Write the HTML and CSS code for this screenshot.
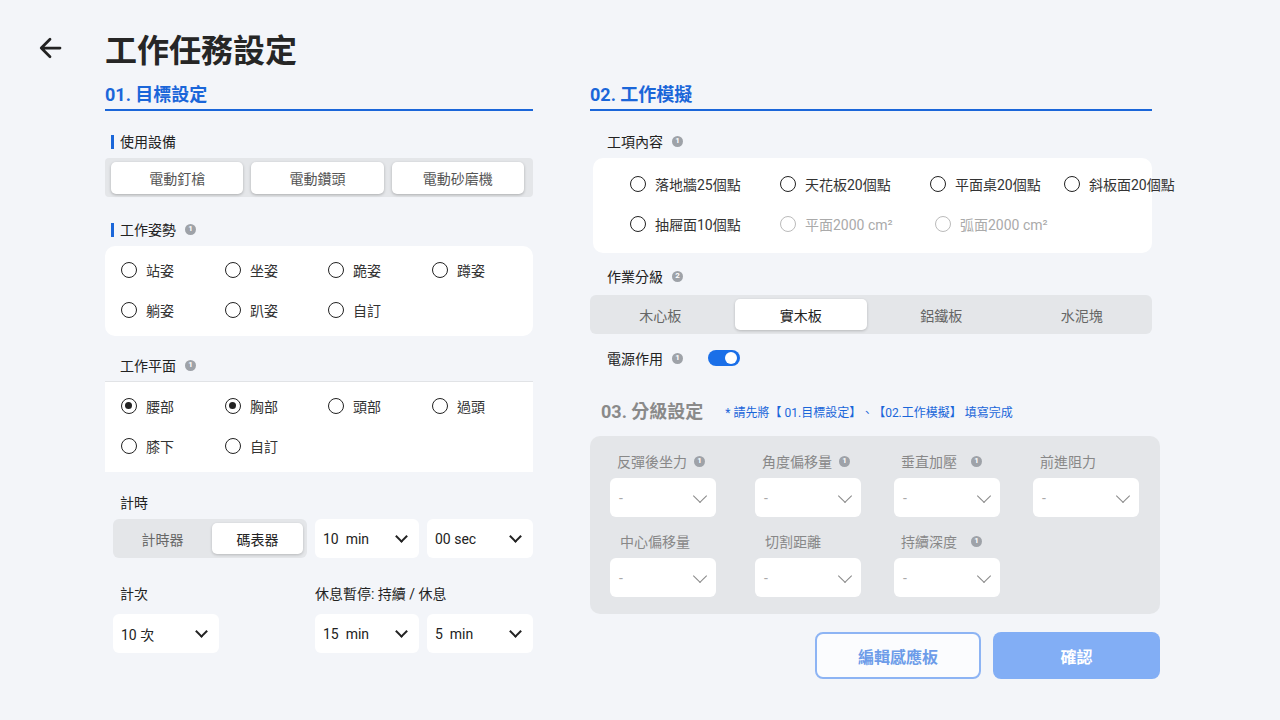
FILE: index.html
```html
<!DOCTYPE html>
<html lang="zh-Hant">
<head>
    <meta charset="UTF-8">
    <title>工作任務設定</title>
    <link rel="stylesheet" href="styles.css">
</head>
<body>
    <div class="page">
        <div class="topbar">
            <svg class="back" width="30" height="30" viewBox="0 0 24 24"><path d="M20 12H5M12 5l-7 7 7 7" fill="none" stroke="#222" stroke-width="2.2" stroke-linecap="round" stroke-linejoin="round"/></svg>
            <h1>工作任務設定</h1>
        </div>

        <div class="columns">
            <!-- 01 -->
            <div class="col-left">
                <div class="sec-title">01. 目標設定</div>

                <div class="label bar first">使用設備</div>
                <div class="tool-group">
                    <div class="tool">電動釘槍</div>
                    <div class="tool">電動鑽頭</div>
                    <div class="tool">電動砂磨機</div>
                </div>

                <div class="label bar">工作姿勢 <span class="info">1</span></div>
                <div class="card radio-grid">
                    <label class="radio"><span class="dot"></span>站姿</label>
                    <label class="radio"><span class="dot"></span>坐姿</label>
                    <label class="radio"><span class="dot"></span>跪姿</label>
                    <label class="radio"><span class="dot"></span>蹲姿</label>
                    <label class="radio"><span class="dot"></span>躺姿</label>
                    <label class="radio"><span class="dot"></span>趴姿</label>
                    <label class="radio"><span class="dot"></span>自訂</label>
                </div>

                <div class="label plane-label">工作平面 <span class="info">1</span></div>
                <div class="plane radio-grid">
                    <label class="radio"><span class="dot on"></span>腰部</label>
                    <label class="radio"><span class="dot on"></span>胸部</label>
                    <label class="radio"><span class="dot"></span>頭部</label>
                    <label class="radio"><span class="dot"></span>過頭</label>
                    <label class="radio"><span class="dot"></span>膝下</label>
                    <label class="radio"><span class="dot"></span>自訂</label>
                </div>

                <div class="timer">
                    <div class="t-label">計時</div>
                    <div class="t-label"></div>
                    <div class="t-label"></div>
                    <div class="seg small">
                        <div class="seg-item">計時器</div>
                        <div class="seg-item active">碼表器</div>
                    </div>
                    <div class="select">10&nbsp; min<span class="chev"></span></div>
                    <div class="select">00 sec<span class="chev"></span></div>

                    <div class="t-label second">計次</div>
                    <div class="t-label second span2">休息暫停: 持續 / 休息</div>
                    <div><div class="select count">10 次<span class="chev"></span></div></div>
                    <div class="select">15&nbsp; min<span class="chev"></span></div>
                    <div class="select">5&nbsp; min<span class="chev"></span></div>
                </div>
            </div>

            <!-- 02 / 03 -->
            <div class="col-right">
                <div class="sec-title narrow">02. 工作模擬</div>

                <div class="label r first">工項內容 <span class="info">1</span></div>
                <div class="card work-card">
                    <label class="radio"><span class="dot"></span>落地牆25個點</label>
                    <label class="radio"><span class="dot"></span>天花板20個點</label>
                    <label class="radio"><span class="dot"></span>平面桌20個點</label>
                    <label class="radio"><span class="dot"></span>斜板面20個點</label>
                    <label class="radio"><span class="dot"></span>抽屜面10個點</label>
                    <label class="radio off"><span class="dot"></span>平面2000 cm²</label>
                    <label class="radio off shift"><span class="dot"></span>弧面2000 cm²</label>
                </div>

                <div class="label r grade">作業分級 <span class="info">2</span></div>
                <div class="seg wide">
                    <div class="seg-item">木心板</div>
                    <div class="seg-item active">實木板</div>
                    <div class="seg-item">鋁鐵板</div>
                    <div class="seg-item">水泥塊</div>
                </div>

                <div class="label r power">電源作用 <span class="info">1</span><span class="toggle"></span></div>

                <div class="sub-head">
                    <span class="sub-title">03. 分級設定</span>
                    <span class="note">* 請先將【 01.目標設定】、【02.工作模擬】 填寫完成</span>
                </div>

                <div class="panel">
                    <div class="field">
                        <div class="f-label">反彈後坐力 <span class="info">1</span></div>
                        <div class="select dim">-<span class="chev"></span></div>
                    </div>
                    <div class="field">
                        <div class="f-label">角度偏移量 <span class="info">1</span></div>
                        <div class="select dim">-<span class="chev"></span></div>
                    </div>
                    <div class="field">
                        <div class="f-label">垂直加壓 &nbsp;<span class="info">1</span></div>
                        <div class="select dim">-<span class="chev"></span></div>
                    </div>
                    <div class="field">
                        <div class="f-label">前進阻力</div>
                        <div class="select dim">-<span class="chev"></span></div>
                    </div>
                    <div class="field">
                        <div class="f-label wide-pad">中心偏移量</div>
                        <div class="select dim">-<span class="chev"></span></div>
                    </div>
                    <div class="field">
                        <div class="f-label wide-pad">切割距離</div>
                        <div class="select dim">-<span class="chev"></span></div>
                    </div>
                    <div class="field">
                        <div class="f-label">持續深度 &nbsp;<span class="info">1</span></div>
                        <div class="select dim">-<span class="chev"></span></div>
                    </div>
                </div>

                <div class="actions">
                    <button class="btn outline">編輯感應板</button>
                    <button class="btn primary">確認</button>
                </div>
            </div>
        </div>
    </div>
</body>
</html>
```

FILE: styles.css
```css
* {
    margin: 0;
    padding: 0;
    box-sizing: border-box;
}

body {
    background: #f3f5f9;
    font-family: Roboto, "Noto Sans CJK TC", sans-serif;
    color: #333;
    font-size: 14px;
}

.page {
    width: 1280px;
    height: 720px;
    padding-top: 28px;
    overflow: hidden;
}

.topbar {
    display: flex;
    align-items: center;
    height: 40px;
    padding-left: 35px;
}

.back {
    display: block;
}

.topbar h1 {
    margin-left: 40px;
    font-size: 32px;
    line-height: 40px;
    font-weight: 700;
    color: #262626;
    font-family: "Noto Sans CJK TC", sans-serif;
}

.columns {
    display: flex;
    gap: 57px;
    padding-left: 105px;
}

.col-left {
    width: 428px;
}

.col-right {
    width: 570px;
}

.sec-title {
    margin-top: 15px;
    padding-bottom: 2px;
    font-size: 18px;
    line-height: 24px;
    font-weight: 700;
    color: #1a66d9;
    border-bottom: 2px solid #1a66d9;
}

.sec-title.narrow {
    width: 562px;
}

/* labels */
.label {
    display: flex;
    align-items: center;
    height: 20px;
    padding-left: 15px;
    margin-top: 22px;
    margin-bottom: 7px;
    color: #222;
    font-size: 14px;
    position: relative;
}

.label.first {
    margin-top: 20px;
}

.label.bar::before {
    content: "";
    position: absolute;
    left: 6px;
    top: 4px;
    width: 3px;
    height: 14px;
    background: #1a66d9;
}

.label.plane-label {
    margin-top: 19px;
    margin-bottom: 6px;
}

.label.r {
    padding-left: 17px;
}

.label.grade {
    margin-top: 13px;
    margin-bottom: 9px;
}

.label.power {
    margin-top: 14px;
}

.info {
    display: inline-flex;
    align-items: center;
    justify-content: center;
    width: 11px;
    height: 11px;
    margin-left: 9px;
    border-radius: 50%;
    background: #9ea2a8;
    color: #fff;
    font-size: 8px;
    font-weight: 700;
    line-height: 1;
    font-family: Roboto, sans-serif;
}

.toggle {
    position: relative;
    width: 32px;
    height: 16px;
    margin-left: 25px;
    border-radius: 8px;
    background: #1a6fe8;
}

.toggle::after {
    content: "";
    position: absolute;
    right: 3px;
    top: 2px;
    width: 12px;
    height: 12px;
    border-radius: 50%;
    background: #fff;
}

/* equipment */
.tool-group {
    display: grid;
    grid-template-columns: repeat(3, 1fr);
    gap: 8px;
    height: 39px;
    padding: 4px 9px 3px 6px;
    background: #e4e6e9;
    border-radius: 4px;
}

.tool {
    display: flex;
    align-items: center;
    justify-content: center;
    background: #fff;
    border-radius: 5px;
    box-shadow: 0 1px 3px rgba(0,0,0,0.25);
    color: #555;
    font-size: 14px;
}

/* radios */
.card {
    background: #fff;
    border-radius: 10px;
}

.radio-grid {
    display: grid;
    grid-template-columns: 104px 103px 104px 104px;
    padding: 4px 0 6px 16px;
}

.plane {
    background: #fff;
    border-top: 1px solid #e1e3e6;
    padding-top: 4px;
    height: 91px;
}

.radio {
    display: flex;
    align-items: center;
    height: 40px;
    color: #333;
    font-size: 14px;
    white-space: nowrap;
}

.dot {
    position: relative;
    flex: none;
    width: 16px;
    height: 16px;
    margin-right: 9px;
    border: 1.5px solid #222;
    border-radius: 50%;
}

.dot.on::after {
    content: "";
    position: absolute;
    left: 3px;
    top: 3px;
    width: 7px;
    height: 7px;
    border-radius: 50%;
    background: #222;
}

.radio.off {
    color: #aaa;
}

.radio.off .dot {
    border-color: #bbb;
}

.work-card {
    display: grid;
    grid-template-columns: 150px 150px 134px auto;
    width: 559px;
    margin-left: 3px;
    height: 95px;
    padding: 6px 0 9px 37px;
}

.radio.shift {
    padding-left: 5px;
}

/* segmented control */
.seg {
    display: flex;
    gap: 4px;
    padding: 4px;
    height: 39px;
    background: #e4e6e9;
    border-radius: 6px;
}

.seg.wide {
    width: 562px;
    gap: 8px;
}

.seg-item {
    flex: 1;
    display: flex;
    align-items: center;
    justify-content: center;
    color: #666;
    font-size: 14px;
    border-radius: 5px;
}

.seg-item.active {
    background: #fff;
    color: #222;
    box-shadow: 0 1px 3px rgba(0,0,0,0.2);
}

/* timer */
.timer {
    display: grid;
    grid-template-columns: 194px 104px 106px;
    column-gap: 8px;
    margin-left: 8px;
}

.t-label {
    height: 20px;
    line-height: 20px;
    margin-top: 21px;
    margin-bottom: 6px;
    padding-left: 7px;
    color: #222;
}

.t-label.second {
    margin-top: 26px;
    margin-bottom: 10px;
}

.t-label.span2 {
    grid-column: span 2;
    padding-left: 0;
}

.select {
    position: relative;
    display: flex;
    align-items: center;
    height: 39px;
    padding-left: 8px;
    background: #fff;
    border-radius: 6px;
    color: #222;
    font-size: 14px;
}

.select.count {
    width: 106px;
}

.chev {
    position: absolute;
    right: 13px;
    top: 13px;
    width: 9px;
    height: 9px;
    border-right: 2px solid #222;
    border-bottom: 2px solid #222;
    transform: rotate(45deg);
}

.select.dim {
    color: #aaa;
    padding-left: 9px;
}

.select.dim .chev {
    border-color: #888;
    border-width: 1.5px;
    width: 10px;
    height: 10px;
    right: 11px;
}

/* 03 */
.sub-head {
    display: flex;
    align-items: center;
    height: 24px;
    margin-top: 30px;
    padding-left: 11px;
}

.sub-title {
    font-size: 18px;
    font-weight: 700;
    color: #8a8a8a;
}

.note {
    margin-left: 22px;
    margin-top: 2px;
    font-size: 12px;
    text-spacing-trim: space-all;
    color: #1a66d9;
}

.panel {
    display: grid;
    grid-template-columns: 145px 139px 139px 139px;
    align-content: start;
    row-gap: 14px;
    height: 178px;
    margin-top: 14px;
    padding: 15px 0 0 20px;
    background: #e4e6e9;
    border-radius: 10px;
}

.field {
    width: 106px;
}

.f-label {
    display: flex;
    align-items: center;
    height: 20px;
    margin-bottom: 7px;
    padding-left: 7px;
    color: #888;
    font-size: 14px;
    white-space: nowrap;
}

.f-label.wide-pad {
    padding-left: 10px;
}

.f-label .info {
    margin-left: 7px;
}

/* buttons */
.actions {
    display: flex;
    justify-content: flex-end;
    gap: 12px;
    margin-top: 18px;
}

.btn {
    width: 167px;
    height: 47px;
    border-radius: 8px;
    font-family: "Noto Sans CJK TC", sans-serif;
    font-size: 16px;
    font-weight: 700;
    cursor: pointer;
}

.btn.outline {
    width: 166px;
    background: #fbfcfe;
    border: 2px solid #8db4f4;
    color: #6d9ce9;
}

.btn.primary {
    background: #82aef5;
    border: none;
    color: #fff;
}
```
